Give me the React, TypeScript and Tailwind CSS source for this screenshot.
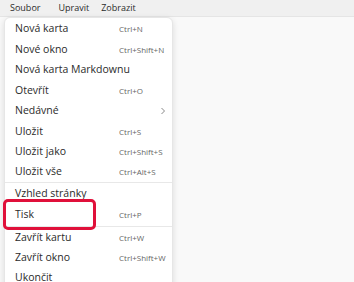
import React from "react";

type Item = { label: string; shortcut?: string; sub?: boolean; h: number; highlight?: boolean };

const group1: Item[] = [
  { label: "Nová karta", shortcut: "Ctrl+N", h: 20 },
  { label: "Nové okno", shortcut: "Ctrl+Shift+N", h: 21 },
  { label: "Nová karta Markdownu", h: 20 },
  { label: "Otevřít", shortcut: "Ctrl+O", h: 21 },
  { label: "Nedávné", sub: true, h: 20 },
  { label: "Uložit", shortcut: "Ctrl+S", h: 21 },
  { label: "Uložit jako", shortcut: "Ctrl+Shift+S", h: 20 },
  { label: "Uložit vše", shortcut: "Ctrl+Alt+S", h: 20 },
];
const group2: Item[] = [
  { label: "Vzhled stránky", h: 21 },
  { label: "Tisk", shortcut: "Ctrl+P", h: 21, highlight: true },
];
const group3: Item[] = [
  { label: "Zavřít kartu", shortcut: "Ctrl+W", h: 20 },
  { label: "Zavřít okno", shortcut: "Ctrl+Shift+W", h: 20 },
  { label: "Ukončit", h: 19 },
];

function Row({ it }: { it: Item }) {
  return (
    <div className="relative flex items-center pl-[10px] pr-[10px]" style={{ height: it.h }}>
      <span className="flex-1 text-[10.5px] text-[#2b2b2b]">{it.label}</span>
      {it.shortcut && (
        <span className="absolute left-[114px] text-[8px] text-[#666666]">{it.shortcut}</span>
      )}
      {it.sub && (
        <svg width="6" height="8" viewBox="0 0 6 8" className="absolute left-[155px]">
          <path d="M1.5 1 L4.5 4 L1.5 7" fill="none" stroke="#7a7a7a" strokeWidth="0.9" />
        </svg>
      )}
      {it.highlight && (
        <div className="absolute left-[-2px] top-[-5px] w-[93px] h-[31px] border-[3px] border-[#e0103a] rounded-[5px]" />
      )}
    </div>
  );
}

export default function App() {
  return (
    <div
      className="relative w-[354px] h-[282px] overflow-hidden bg-[#f9f9f9]"
      style={{ fontFamily: '"Open Sans", "Noto Sans", sans-serif' }}
    >
      <div className="flex items-center h-[17px] bg-[#f0f0f0] border-b border-[#e5e5e5] text-[9px] text-[#2b2b2b]">
        <div className="pl-[10px]">Soubor</div>
        <div className="ml-[18px]">Upravit</div>
        <div className="ml-[12px]">Zobrazit</div>
      </div>
      <div className="absolute left-[4px] top-[17px] w-[169px] h-[280px] bg-white rounded-[6px] border border-[#e6e6e6] shadow-[0_2px_6px_rgba(0,0,0,0.12)] pt-[1px]">
        {group1.map((it) => (
          <Row key={it.label} it={it} />
        ))}
        <div className="h-px bg-[#e8e8e8]" />
        {group2.map((it) => (
          <Row key={it.label} it={it} />
        ))}
        <div className="h-px bg-[#e8e8e8] my-[1px]" />
        {group3.map((it) => (
          <Row key={it.label} it={it} />
        ))}
      </div>
    </div>
  );
}
